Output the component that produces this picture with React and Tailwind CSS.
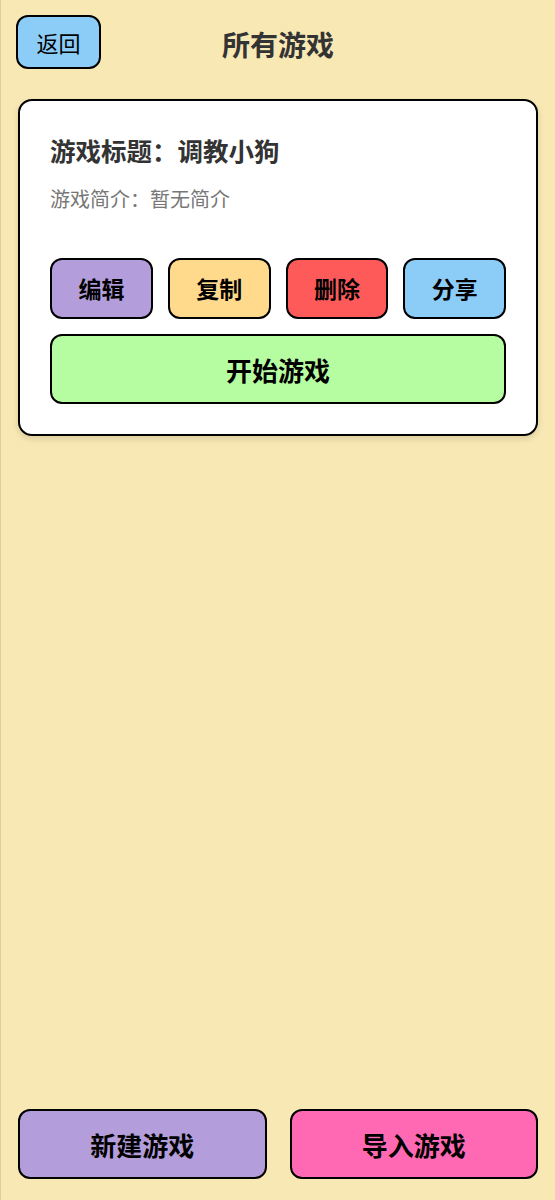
import React from 'react';

const font = "font-['Noto_Sans_CJK_SC','Noto_Sans',sans-serif]";

const actions = [
  { label: '编辑', color: 'bg-[#b39ddb]' },
  { label: '复制', color: 'bg-[#ffd98c]' },
  { label: '删除', color: 'bg-[#ff5a5a]' },
  { label: '分享', color: 'bg-[#8ccdf8]' },
];

const games = [{ id: 1, title: '调教小狗', desc: '暂无简介' }];

const GameCard = ({ game }) => (
  <div className="bg-white border-2 border-black rounded-[14px] px-[30px] pt-[30px] pb-[30px] shadow-[0_3px_6px_rgba(0,0,0,0.12)]">
    <h2 className="text-[25.5px] font-bold text-[#333] leading-[38px]">游戏标题：{game.title}</h2>
    <p className="text-[20px] text-[#777] leading-[30px] mt-[15px]">游戏简介：{game.desc}</p>
    <div className="grid grid-cols-4 gap-[15px] mt-[44px]">
      {actions.map(a => (
        <button
          key={a.label}
          className={`${a.color} h-[61px] border-2 border-black rounded-[12px] text-[23px] font-bold text-black`}
        >
          {a.label}
        </button>
      ))}
    </div>
    <button className="w-full h-[70px] mt-[15px] bg-[#b6fca0] border-2 border-black rounded-[12px] text-[26px] font-bold text-black">
      开始游戏
    </button>
  </div>
);

export default function App() {
  return (
    <div className={`${font} min-h-screen bg-[#f8e8b4] border-l border-[#dccf9f] flex flex-col`}>
      {/* header */}
      <div className="relative flex items-center justify-center h-[84px]">
        <button className="absolute left-[15px] top-[15px] w-[85px] h-[54px] bg-[#8ccdf8] border-2 border-black rounded-[12px] text-[22px] text-black">
          返回
        </button>
        <h1 className="text-[28px] font-bold text-[#333] mt-[4px]">所有游戏</h1>
      </div>

      <div className="flex-1 px-[17px] pt-[15px] flex flex-col gap-4">
        {games.map(g => <GameCard key={g.id} game={g} />)}
      </div>

      {/* bottom actions */}
      <div className="grid grid-cols-2 gap-[23px] px-[17px] pb-[21px]">
        <button className="h-[70px] bg-[#b39ddb] border-2 border-black rounded-[12px] text-[26px] font-bold text-black">
          新建游戏
        </button>
        <button className="h-[70px] bg-[#ff69b4] border-2 border-black rounded-[12px] text-[26px] font-bold text-black">
          导入游戏
        </button>
      </div>
    </div>
  );
}
